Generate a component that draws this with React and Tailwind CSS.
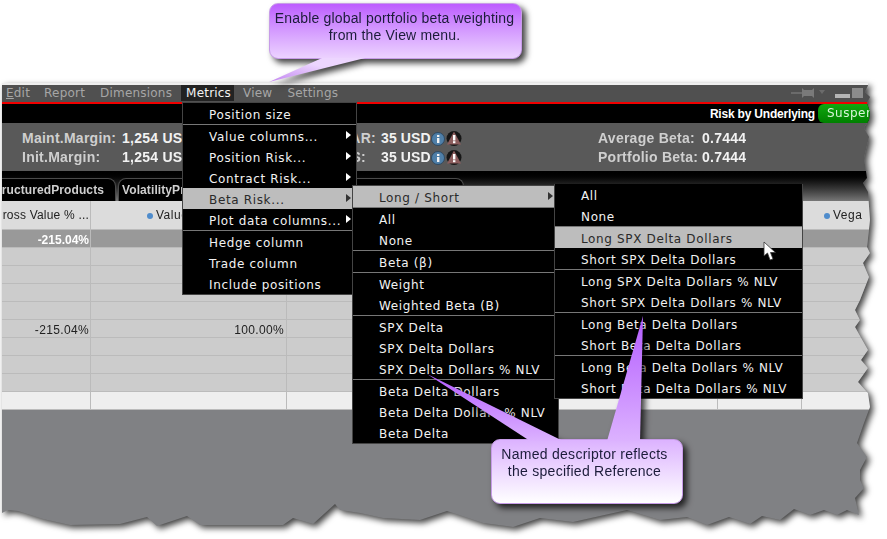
import React from 'react';

const menuOne = [
  { label: 'Position size' },
  null,
  { label: 'Value columns...', arrow: true },
  { label: 'Position Risk...', arrow: true },
  { label: 'Contract Risk...', arrow: true },
  { label: 'Beta Risk...', arrow: true, active: true },
  { label: 'Plot data columns...', arrow: true },
  null,
  { label: 'Hedge column' },
  { label: 'Trade column' },
  { label: 'Include positions' },
];

const menuTwo = [
  { label: 'Long / Short', arrow: true, active: true },
  null,
  { label: 'All' },
  { label: 'None' },
  null,
  { label: 'Beta (β)' },
  null,
  { label: 'Weight' },
  { label: 'Weighted Beta (B)' },
  null,
  { label: 'SPX Delta' },
  { label: 'SPX Delta Dollars' },
  { label: 'SPX Delta Dollars % NLV' },
  null,
  { label: 'Beta Delta Dollars' },
  { label: 'Beta Delta Dollars % NLV' },
  { label: 'Beta Delta' },
];

const menuThree = [
  { label: 'All' },
  { label: 'None' },
  null,
  { label: 'Long SPX Delta Dollars', active: true },
  { label: 'Short SPX Delta Dollars' },
  null,
  { label: 'Long SPX Delta Dollars % NLV' },
  { label: 'Short SPX Delta Dollars % NLV' },
  null,
  { label: 'Long Beta Delta Dollars' },
  { label: 'Short Beta Delta Dollars' },
  null,
  { label: 'Long Beta Delta Dollars % NLV' },
  { label: 'Short Beta Delta Dollars % NLV' },
];

const Menu = ({ items, className }) => (
  <div className={`absolute bg-black font-['DejaVu_Sans',sans-serif] text-[12px] tracking-[0.65px] ${className}`}>
    {items.map((item, i) =>
      item ? (
        <div
          key={i}
          className={`relative h-[21px] pl-[26px] leading-[24px] whitespace-nowrap ${
            item.active ? 'bg-[#bdbdbd] text-[#2a2a2a]' : 'text-[#f2f2f2]'
          }`}
        >
          {item.label}
          {item.arrow && (
            <span
              className={`absolute right-[5px] top-[6px] h-0 w-0 border-y-[4px] border-l-[5px] border-y-transparent ${
                item.active ? 'border-l-[#333333]' : 'border-l-white'
              }`}
            />
          )}
        </div>
      ) : (
        <div key={i} className="h-px bg-[#777777]" />
      )
    )}
  </div>
);

const InfoIcon = () => (
  <svg width="14" height="14" viewBox="0 0 14 14">
    <circle cx="7" cy="7" r="6.5" fill="#4f7fa8" />
    <circle cx="7" cy="7" r="6.5" fill="none" stroke="#2f4a63" />
    <rect x="6" y="6" width="2.4" height="5" fill="#f2f2f2" />
    <rect x="6" y="3" width="2.4" height="2" fill="#f2f2f2" />
  </svg>
);

const WarnIcon = () => (
  <svg width="16" height="15" viewBox="0 0 16 15">
    <circle cx="8" cy="7.5" r="7.5" fill="#161616" />
    <path d="M8 0.5 L15 13.5 L1 13.5 Z" fill="#8b5d5d" />
    <rect x="7" y="4" width="2.4" height="5.5" fill="#ffffff" />
    <rect x="7" y="10.2" width="2.4" height="2" fill="#ffffff" />
  </svg>
);

const InfoRow = ({ label, value, midLabel, midClass, betaLabel }) => (
  <div className="flex h-[19px] items-center whitespace-nowrap text-[14px] font-bold tracking-[0.25px]">
    <span className="w-[100px] text-[#cfcfcf]">{label}</span>
    <span className="w-[160px] text-[#f2f2f2]">{value}</span>
    <span className={`w-[94px] text-right text-[#cfcfcf] ${midClass}`}>{midLabel}</span>
    <span className="ml-[5px] w-[50px] tracking-[0.1px] text-[#f2f2f2]">35 USD</span>
    <span className="flex w-[167px] items-center gap-px">
      <InfoIcon />
      <WarnIcon />
    </span>
    <span className="w-[104px] text-[#cfcfcf]">{betaLabel}</span>
    <span className="text-[#f2f2f2]">0.7444</span>
  </div>
);

const Row = ({ className, first, second }) => (
  <div className={`grid h-[18px] grid-cols-[89px_196px_431px_84px_1fr] border-b border-[#bbbbbb] text-[12px] leading-[20px] ${className}`}>
    <div className="border-r border-[#bbbbbb] pr-[1px] text-right">{first}</div>
    <div className="border-r border-[#bbbbbb] pr-[2px] text-right">{second}</div>
    <div className="border-r border-[#bbbbbb]" />
    <div className="border-r border-[#bbbbbb]" />
    <div />
  </div>
);

const HeaderDot = () => <span className="mr-[3px] inline-block h-[6px] w-[6px] rounded-full bg-[#4f8ccc]" />;

const Callout = ({ className, children }) => (
  <div className={`absolute rounded-[9px] text-center font-['Liberation_Sans',sans-serif] text-[14px] leading-[17px] text-[#1c1c3a] ${className}`}>
    {children}
  </div>
);

const App = () => {
  return (
    <div className="relative h-[539px] w-[887px] overflow-hidden bg-white font-['Liberation_Sans',sans-serif]">
      <div className="pl-[2px] pt-[83px] drop-shadow-[3px_3px_3px_rgba(0,0,0,0.75)]">
        <div className="h-[2px] w-[866px] bg-[#eeeeee]" />
        <div className="flex h-[442px] w-[868px] flex-col bg-[#808184] [clip-path:polygon(0_0,866px_0,863px_7px,868px_12px,865px_18px,868px_27px,867px_35px,862px_43px,867px_52px,862px_73px,865px_93px,861px_98px,866px_107px,868px_135px,865px_162px,868px_168px,861px_178px,867px_192px,858px_215px,853px_225px,858px_235px,853px_242px,866px_265px,859px_275px,866px_283px,856px_297px,866px_308px,868px_322px,862px_338px,855px_358px,865px_372px,858px_385px,858px_395px,862px_403px,853px_413px,857px_430px,845px_425px,835px_430px,822px_425px,808px_430px,792px_424px,778px_435px,760px_431px,748px_439px,727px_432px,705px_440px,685px_432px,658px_435px,625px_425px,571px_437px,538px_433px,511px_442px,481px_438px,445px_426px,418px_435px,381px_433px,358px_428px,338px_425px,333px_419px,311px_439px,291px_433px,281px_440px,198px_440px,185px_431px,155px_441px,145px_432px,118px_439px,68px_440px,41px_434px,16px_426px,6px_425px,0_428px)]">
          {/* menu bar */}
          <div className="flex h-[17px] shrink-0 items-start justify-between bg-[#505050] font-['DejaVu_Sans',sans-serif] text-[12px] tracking-[0.2px] text-[#a6a6a6]">
            <div className="flex h-[16px] items-center pl-[4px]">
              <span><span className="underline">E</span>dit</span>
              <span className="ml-[14px]">Report</span>
              <span className="ml-[15px]">Dimensions</span>
              <span className="ml-[9px] flex h-[16px] w-[53px] items-center bg-[#222222] pl-[5px] text-[#f2f2f2]">Metrics</span>
              <span className="ml-[9px]">View</span>
              <span className="ml-[15px]">Settings</span>
            </div>
            <div className="flex h-[16px] items-center pr-[7px]">
              <svg width="34" height="12" viewBox="0 0 34 12">
                <rect x="0" y="5" width="11" height="2" fill="#6b6b6b" />
                <path d="M11 1 L13 3 L21 3 L23 1 L23 11 L21 9 L13 9 L11 11 Z" fill="#7a7a7a" />
                <path d="M28 3 L34 3 L31 7 Z" fill="#6b6b6b" />
              </svg>
              <span className="ml-[10px] mt-[6px] h-[4px] w-[15px] bg-[#b5b5b5]" />
              <span className="ml-[2px] h-[10px] w-[11px] bg-[#8c8c8c]" />
            </div>
          </div>
          <div className="h-[2px] shrink-0 bg-[#f00000]" />

          {/* title strip */}
          <div className="flex h-[19px] shrink-0 items-center justify-end bg-black">
            <span className="mr-[3px] text-[12px] font-bold tracking-[-0.2px] text-white">Risk by Underlying</span>
            <span className="h-[19px] w-[52px] overflow-hidden whitespace-nowrap rounded-l-[6px] bg-gradient-to-b from-[#10a810] to-[#008000] pl-[9px] font-['DejaVu_Sans',sans-serif] text-[12px] leading-[19px] tracking-[0.5px] text-[#d8f5d8]">
              Suspend
            </span>
          </div>

          {/* margin summary */}
          <div className="flex h-[48px] shrink-0 flex-col justify-center bg-[#595959] pl-[20px] pt-[2px]">
            <InfoRow label="Maint.Margin:" value="1,254 USD" midLabel="VAR:" betaLabel="Average Beta:" />
            <InfoRow label="Init.Margin:" value="1,254 USD" midLabel="ES:" midClass="pr-[10px]" betaLabel="Portfolio Beta:" />
          </div>

          {/* tabs */}
          <div className="flex h-[30px] shrink-0 items-end bg-gradient-to-b from-black to-[#777777] text-[12px] font-bold tracking-[0.1px] text-[#cfcfcf]">
            <div className="flex h-[23px] w-[114px] justify-end overflow-hidden whitespace-nowrap rounded-tr-[8px] border-r border-t border-[#4a4a4a] bg-black pr-[11px] leading-[22px]">
              <span className="shrink-0">StructuredProducts</span>
            </div>
            <div className="ml-[2px] h-[23px] w-[346px] overflow-hidden rounded-t-[8px] border-l border-r border-t border-[#4a4a4a] bg-black pl-[3px] leading-[22px]">
              VolatilityProfile
            </div>
          </div>

          {/* table */}
          <div className="grid h-[29px] shrink-0 grid-cols-[89px_196px_431px_84px_1fr] border-b border-[#bbbbbb] bg-[#dcdcdc] text-[12px] leading-[28px] tracking-[0.5px] text-[#222222]">
            <div className="flex justify-end overflow-hidden whitespace-nowrap border-r border-[#bbbbbb] pr-[1px] tracking-[0.2px]">
              <span className="shrink-0">Gross Value % ...</span>
            </div>
            <div className="border-r border-[#bbbbbb] pl-[56px]">
              <HeaderDot />Value
            </div>
            <div className="border-r border-[#bbbbbb]" />
            <div className="border-r border-[#bbbbbb]" />
            <div className="pl-[22px]">
              <HeaderDot />Vega
            </div>
          </div>
          <Row className="bg-[#999999] font-bold text-white" first="-215.04%" />
          <Row className="bg-[#cccccc]" />
          <Row className="bg-[#cccccc]" />
          <Row className="bg-[#cccccc]" />
          <Row className="bg-[#cccccc]" />
          <Row className="bg-[#cccccc] tracking-[0.35px] text-[#222222]" first="-215.04%" second="100.00%" />
          <Row className="bg-[#cccccc]" />
          <Row className="bg-[#cccccc]" />
          <Row className="bg-[#cccccc]" />
          <Row className="bg-[#eeeeee]" />
        </div>
      </div>

      <Menu items={menuOne} className="left-[182px] top-[102px] w-[175px] border border-[#444444]" />
      <Menu items={menuTwo} className="left-[352px] top-[185px] w-[207px] border border-[#444444]" />
      <Menu items={menuThree} className="left-[554px] top-[184px] w-[249px] border-x border-b border-[#444444]" />

      {/* mouse pointer */}
      <svg className="absolute left-[763px] top-[241px]" width="16" height="21" viewBox="0 0 16 21">
        <path d="M1 1 L1 15 L4.5 12 L7 19 L10 18 L7.5 11.5 L12.5 11.5 Z" fill="#ffffff" stroke="#333333" strokeWidth="0.8" />
      </svg>

      {/* top callout */}
      <div className="absolute left-0 top-0 drop-shadow-[4px_4px_3px_rgba(0,0,0,0.75)]">
        <Callout className="left-[269px] top-[3px] h-[56px] w-[253px] border border-[#c79ce8] bg-gradient-to-b from-[#bd5cff] to-[#ecd2ff] pr-[2px] pt-[6px] tracking-[0.18px]">
          Enable global portfolio beta weighting<br />from the View menu.
        </Callout>
        <svg className="absolute left-[268px] top-[56px]" width="100" height="28" viewBox="0 0 100 28">
          <defs>
            <linearGradient id="tailTop" x1="0" y1="1" x2="1" y2="0">
              <stop offset="0" stopColor="#c184f0" />
              <stop offset="0.6" stopColor="#edd6ff" />
            </linearGradient>
          </defs>
          <path d="M54 2 L97 2 L1 26 Z" fill="url(#tailTop)" />
        </svg>
      </div>

      {/* bottom callout */}
      <div className="absolute left-0 top-0 drop-shadow-[4px_4px_3px_rgba(0,0,0,0.75)]">
        <Callout className="left-[491px] top-[439px] h-[65px] w-[192px] border border-[#c79ce8] bg-gradient-to-b from-[#dcb2ff] to-white pr-[5px] pt-[6px] tracking-[0.27px]">
          Named descriptor reflects<br />the specified Reference
        </Callout>
        <svg className="absolute left-[420px] top-[310px]" width="240" height="135" viewBox="0 0 240 135">
          <defs>
            <linearGradient id="tailA" x1="0" y1="0" x2="0" y2="1">
              <stop offset="0" stopColor="#b45cff" />
              <stop offset="1" stopColor="#dcb2ff" />
            </linearGradient>
          </defs>
          <path d="M7 64 L143 131 L110 131 Z" fill="url(#tailA)" />
          <path d="M223 6 L220 131 L187 131 Z" fill="url(#tailA)" />
        </svg>
      </div>
    </div>
  );
};

export default App;
